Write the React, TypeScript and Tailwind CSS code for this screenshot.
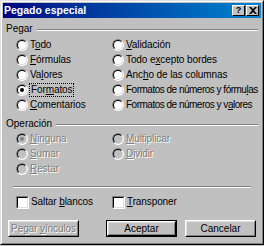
import React from 'react'

function Radio({ checked, disabled }: { checked?: boolean; disabled?: boolean }) {
  return (
    <span className="relative inline-block w-3 h-3 shrink-0 rounded-full border border-t-[#808080] border-l-[#808080] border-b-white border-r-white">
      <span className={disabled ? 'absolute inset-0 rounded-full border border-t-black border-l-black border-b-[#dfdfdf] border-r-[#dfdfdf] bg-[#c0c0c0]' : 'absolute inset-0 rounded-full border border-t-black border-l-black border-b-[#dfdfdf] border-r-[#dfdfdf] bg-white'} />
      {checked && (
        <span className={disabled ? 'absolute left-[3px] top-[3px] w-1 h-1 rounded-full bg-[#808080]' : 'absolute left-[3px] top-[3px] w-1 h-1 rounded-full bg-black'} />
      )}
    </span>
  )
}

function Check() {
  return (
    <span className="inline-block w-[13px] h-[13px] shrink-0 border border-t-[#808080] border-l-[#808080] border-b-white border-r-white">
      <span className="block w-full h-full border border-t-black border-l-black border-b-[#dfdfdf] border-r-[#dfdfdf] bg-white" />
    </span>
  )
}

// label with accelerator underline
function L({ pre, u, post, disabled, tight }: { pre: string; u: string; post: string; disabled?: boolean; tight?: boolean }) {
  let cls = 'whitespace-nowrap text-black tracking-[-0.1px]'
  if (disabled) cls = 'whitespace-nowrap text-[#808080] [text-shadow:1px_1px_0_#fff] tracking-[-0.1px]'
  if (tight) cls = 'whitespace-nowrap text-black tracking-[-0.5px]'
  return (
    <span className={cls}>
      {pre}
      <span className="underline underline-offset-1">{u}</span>
      {post}
    </span>
  )
}

function Opt({ children, checked, disabled }: { children: React.ReactNode; checked?: boolean; disabled?: boolean }) {
  return (
    <div className="flex items-center gap-[2px] h-[15px]">
      <Radio checked={checked} disabled={disabled} />
      {children}
    </div>
  )
}

function GroupTitle({ text }: { text: string }) {
  return (
    <div className="flex items-center h-[14px] pl-[3px] pr-[3px]">
      <span className="whitespace-nowrap">{text}</span>
      <div className="flex-1 ml-[4px] mt-[2px] border-t border-t-[#808080] border-b border-b-white" />
    </div>
  )
}

function Btn({ children, isDefault }: { children: React.ReactNode; isDefault?: boolean }) {
  const inner = (
    <div className="h-full w-full border border-t-white border-l-white border-b-black border-r-black">
      <div className="h-full w-full flex items-center justify-center border border-t-[#dfdfdf] border-l-[#dfdfdf] border-b-[#808080] border-r-[#808080]">
        {children}
      </div>
    </div>
  )
  if (isDefault) {
    return <div className="w-[71px] h-[17px] border border-black">{inner}</div>
  }
  return <div className="w-[71px] h-[17px]">{inner}</div>
}

export default function App() {
  return (
    <div className="w-[264px] h-[246px] bg-[#c0c0c0] font-['Liberation_Sans',Arial,sans-serif] text-[10px] leading-none text-black overflow-hidden">
      <div className="h-[245px] border border-t-[#dfdfdf] border-l-[#dfdfdf] border-b-black border-r-black">
        <div className="h-full border border-t-white border-l-white border-b-[#808080] border-r-[#808080] p-[1px] flex flex-col">
          {/* title bar */}
          <div className="h-[15px] flex items-center bg-linear-to-r from-[#000080] to-[#1084d0] pl-[1px] pr-[2px]">
            <span className="font-bold text-[10.5px] text-white whitespace-nowrap">Pegado especial</span>
            <div className="ml-auto flex gap-[1px]">
              <div className="w-[13px] h-[11px] bg-[#c0c0c0] border border-t-white border-l-white border-b-black border-r-black flex items-center justify-center">
                <span className="font-bold text-[9px] leading-none">?</span>
              </div>
              <div className="w-[13px] h-[11px] bg-[#c0c0c0] border border-t-white border-l-white border-b-black border-r-black flex items-center justify-center">
                <svg width="8" height="7" viewBox="0 0 8 7">
                  <path d="M0 0h2l2 2 2-2h2L5 3.5 8 7H6L4 5 2 7H0l3-3.5z" fill="#000" />
                </svg>
              </div>
            </div>
          </div>

          {/* Pegar */}
          <div className="mt-[4px]">
            <GroupTitle text="Pegar" />
          </div>
          <div className="mt-[1px] grid grid-cols-[96px_1fr] pl-[13px]">
            <div className="flex flex-col">
              <Opt><L pre="T" u="o" post="do" /></Opt>
              <Opt><L pre="" u="F" post="órmulas" /></Opt>
              <Opt><L pre="Va" u="l" post="ores" /></Opt>
              <Opt checked>
                <span className="outline outline-1 outline-dotted outline-black outline-offset-0 px-[1px] py-[1px]">
                  <L pre="For" u="m" post="atos" />
                </span>
              </Opt>
              <Opt><L pre="" u="C" post="omentarios" /></Opt>
            </div>
            <div className="flex flex-col">
              <Opt><L pre="" u="V" post="alidación" /></Opt>
              <Opt><L pre="Todo e" u="x" post="cepto bordes" /></Opt>
              <Opt><L pre="Anc" u="h" post="o de las columnas" /></Opt>
              <Opt><L pre="Formatos de números y fórmu" u="l" post="as" tight /></Opt>
              <Opt><L pre="Formatos de números y v" u="a" post="lores" tight /></Opt>
            </div>
          </div>

          {/* Operacion */}
          <div className="mt-[5px]">
            <GroupTitle text="Operación" />
          </div>
          <div className="grid grid-cols-[96px_1fr] pl-[13px]">
            <div className="flex flex-col">
              <Opt checked disabled><L pre="" u="N" post="inguna" disabled /></Opt>
              <Opt disabled><L pre="" u="S" post="umar" disabled /></Opt>
              <Opt disabled><L pre="" u="R" post="estar" disabled /></Opt>
            </div>
            <div className="flex flex-col">
              <Opt disabled><L pre="" u="M" post="ultiplicar" disabled /></Opt>
              <Opt disabled><L pre="" u="D" post="ividir" disabled /></Opt>
            </div>
          </div>

          <div className="mt-[10px] mx-[10px] border-t border-t-[#808080] border-b border-b-white" />

          <div className="mt-[7px] grid grid-cols-[96px_1fr] pl-[13px]">
            <div className="flex items-center gap-[2px] h-[14px]">
              <Check />
              <L pre="Saltar " u="b" post="lancos" />
            </div>
            <div className="flex items-center gap-[2px] h-[14px]">
              <Check />
              <L pre="" u="T" post="ransponer" />
            </div>
          </div>

          <div className="mt-[11px] flex pl-[5px]">
            <Btn>
              <L pre="Pegar " u="v" post="ínculos" disabled />
            </Btn>
            <div className="ml-[27px]">
              <Btn isDefault>
                <span>Aceptar</span>
              </Btn>
            </div>
            <div className="ml-[8px]">
              <Btn>
                <span>Cancelar</span>
              </Btn>
            </div>
          </div>
        </div>
      </div>
    </div>
  )
}
